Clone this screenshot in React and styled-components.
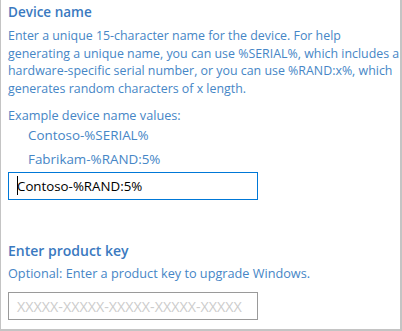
import React from "react";
import styled, { createGlobalStyle } from "styled-components";

const GlobalStyle = createGlobalStyle`
  html, body {
    margin: 0;
    padding: 0;
    background: #ffffff;
  }

  body {
    font-family: "Open Sans", "Noto Sans", sans-serif;
  }
`;

const Panel = styled.div`
  box-sizing: border-box;
  width: 402px;
  height: 331px;
  padding: 1px 0 0 7px;
  border-left: 1px solid #c4c4c4;
  border-right: 2px solid #c4c4c4;
  border-bottom: 2px solid #c4c4c4;
  background: #ffffff;
`;

const Heading = styled.h2`
  margin: ${({ $top }) => $top || 0}px 0 0 0;
  font-size: ${({ $size }) => $size || 13.5}px;
  font-weight: 600;
  line-height: 22px;
  color: #3a79c0;
`;

const Description = styled.p`
  width: 393px;
  margin: ${({ $top }) => $top || 0}px 0 0 0;
  font-size: ${({ $size }) => $size || 12.7}px;
  line-height: 17.5px;
  color: #4686c6;
`;

const ExampleList = styled.ul`
  display: flex;
  flex-direction: column;
  gap: 4px;
  margin: 0;
  padding: 0 0 0 20px;
  list-style: none;
`;

const ExampleItem = styled.li`
  font-size: 13.4px;
  line-height: 20px;
  color: #4686c6;
`;

const TextBox = styled.div`
  box-sizing: border-box;
  display: flex;
  align-items: center;
  width: 250px;
  height: 28px;
  margin-top: ${({ $top }) => $top || 0}px;
  padding-left: 8px;
  border: 1px solid ${({ $focused }) => ($focused ? "#0078d7" : "#9a9a9a")};
  font-size: ${({ $placeholder }) => ($placeholder ? 14.3 : 13.3)}px;
  color: ${({ $placeholder }) => ($placeholder ? "#cccccc" : "#000000")};
  white-space: nowrap;
  overflow: hidden;
`;

const Caret = styled.span`
  display: inline-block;
  flex: none;
  width: 1px;
  height: 19px;
  margin-right: -1px;
  background: #000000;
`;

const App = () => {
  return (
    <>
      <GlobalStyle />
      <Panel>
        <Heading>Device name</Heading>
        <Description $top={4} $size={12.4}>
          Enter a unique 15-character name for the device. For help
          generating a unique name, you can use %SERIAL%, which includes a
          hardware-specific serial number, or you can use %RAND:x%, which
          generates random characters of x length.
        </Description>
        <Description $top={10}>Example device name values:</Description>
        <ExampleList>
          <ExampleItem>Contoso-%SERIAL%</ExampleItem>
          <ExampleItem>Fabrikam-%RAND:5%</ExampleItem>
        </ExampleList>
        <TextBox $top={3} $focused>
          <Caret />
          Contoso-%RAND:5%
        </TextBox>
        <Heading $top={40} $size={14}>
          Enter product key
        </Heading>
        <Description $top={3}>
          Optional: Enter a product key to upgrade Windows.
        </Description>
        <TextBox $top={10} $placeholder>
          XXXXX-XXXXX-XXXXX-XXXXX-XXXXX
        </TextBox>
      </Panel>
    </>
  );
};

export default App;
